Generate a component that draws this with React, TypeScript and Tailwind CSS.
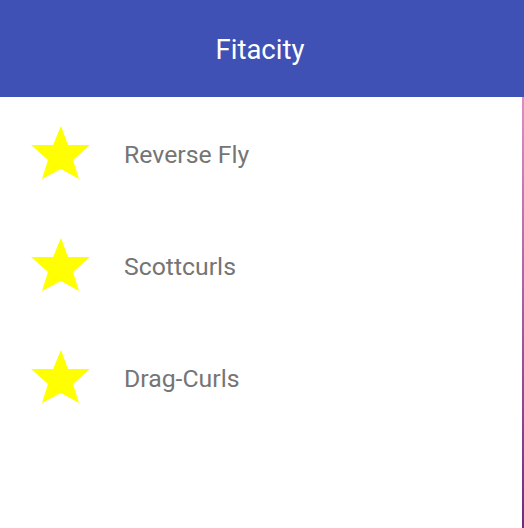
import React from "react";

const exercises: string[] = ["Reverse Fly", "Scottcurls", "Drag-Curls"];

const Star: React.FC = () => (
  <svg width="60" height="54" viewBox="0 0 60 54" className="shrink-0">
    <polygon
      points="30,0 37,19 59,19 42,34 48,53 30,43 11,53 17,34 0,19 22,19"
      fill="#ffff00"
    />
  </svg>
);

const App: React.FC = () => {
  return (
    <div
      className="w-[524px] h-[528px] bg-white flex flex-col overflow-hidden"
      style={{ fontFamily: "Roboto, 'Liberation Sans', sans-serif" }}>
      <header className="h-[97px] bg-[#3f51b5] flex items-center justify-center shrink-0 pr-[4px]">
        <h1 className="text-white text-[27.5px] leading-none mt-[2px]">Fitacity</h1>
      </header>
      <div className="flex flex-1">
        <ul className="flex-1">
          {exercises.map((name) => (
            <li key={name} className="h-[112px] flex items-center pl-[31px]">
              <Star />
              <span className="ml-[33px] text-[24.8px] leading-none text-[#757575] mt-[4px]">
                {name}
              </span>
            </li>
          ))}
        </ul>
        <div className="w-[2px] bg-gradient-to-b from-[#e08cc0] to-[#6e2c80]" />
      </div>
    </div>
  );
};

export default App;
